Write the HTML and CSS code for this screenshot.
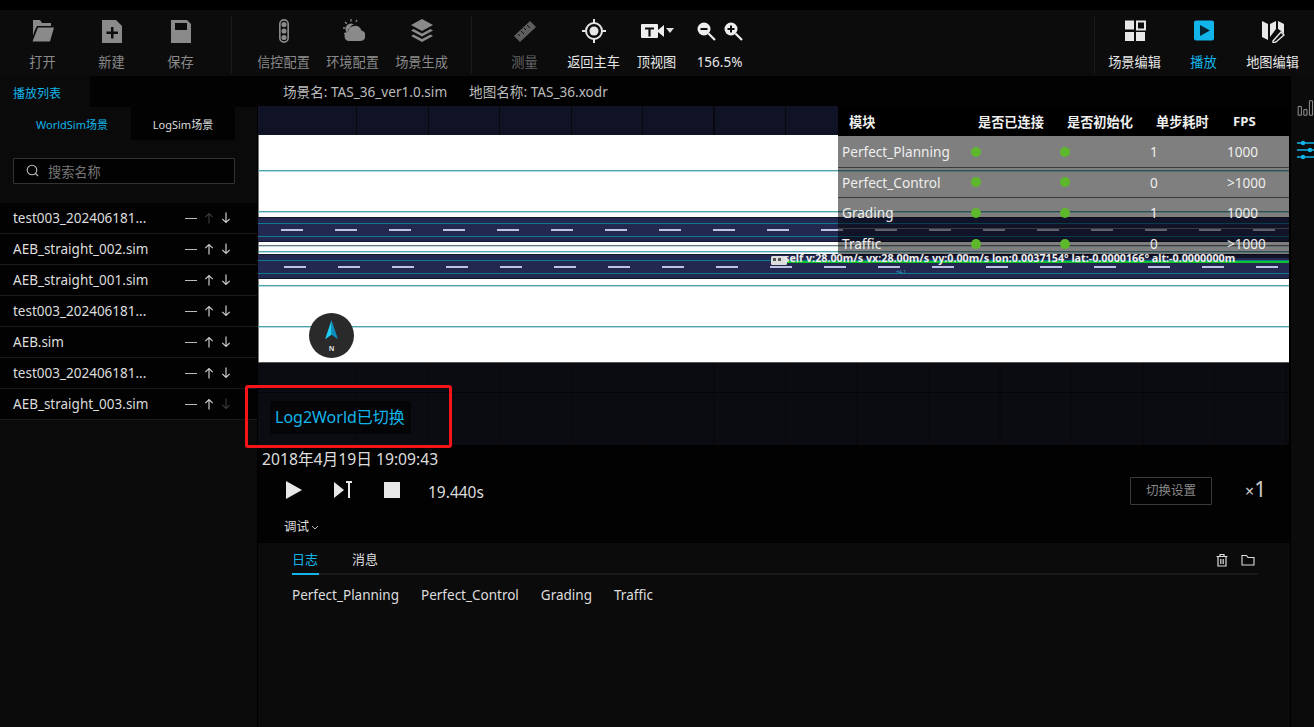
FILE: index.html
```html
<!DOCTYPE html>
<html lang="zh">
<head>
<meta charset="utf-8">
<title>播放</title>
<link rel="stylesheet" href="styles.css">
</head>
<body>
<div class="app">
  <div class="topstrip"></div>
  <header class="toolbar">
    <div class="tool"><svg class="ic" viewBox="0 0 24 24"><path class="g" d="M2 1h7l2 3h9v3H6L3.500 12 2 17z"/><path class="g" d="M7 8.500h16l-4 14H1.500z"/></svg><span>打开</span></div>
    <div class="tool"><svg class="ic" viewBox="0 0 24 24"><path class="g" d="M2 1h14l6 6v17H2z"/><path class="cut" d="M11 8h2.500v4.500H18V15h-4.500v4.500H11V15H6.500v-2.500H11z"/></svg><span>新建</span></div>
    <div class="tool"><svg class="ic" viewBox="0 0 24 24"><path class="g" d="M2 1h16l4 4v19H2z"/><rect class="cut" x="6" y="4" width="12" height="7"/></svg><span>保存</span></div>
    <div class="sep first"></div>
    <div class="tool"><svg class="ic" viewBox="0 0 24 26"><rect x="7.500" y="1" width="9" height="24" rx="4.500" fill="none" stroke="#8a8a8a" stroke-width="1.800"/><circle class="g" cx="12" cy="6" r="2.800"/><circle class="g" cx="12" cy="13" r="2.800"/><circle class="g" cx="12" cy="20" r="2.800"/></svg><span>信控配置</span></div>
    <div class="tool"><svg class="ic" viewBox="0 0 24 24"><circle class="g" cx="10" cy="10" r="5.500"/><path class="cut" d="M8 17a6 6 0 0 1 1-8.500 6.500 6.500 0 0 1 12 1l3 6v7H6z"/><path class="g" d="M8 22a4.800 4.800 0 0 1-1-9.400 7 7 0 0 1 13.500-1A5.300 5.300 0 0 1 19 22z"/><path d="M10 0v2.500M2 9h2.500M4 3l1.800 1.800M3 15l2-1.200M16 1l-1.200 2" stroke="#8a8a8a" stroke-width="1.300" fill="none"/></svg><span>环境配置</span></div>
    <div class="tool"><svg class="ic" viewBox="0 0 24 24"><path class="g" d="M12 0l11 6-11 6L1 6z"/><path class="g" d="M3.500 10l8.500 4.600 8.500-4.600 2.500 1.400-11 6-11-6z"/><path class="g" d="M3.500 15.500l8.500 4.600 8.500-4.600 2.500 1.400-11 6-11-6z"/></svg><span>场景生成</span></div>
    <div class="sep after"></div>
    <div class="tool dim"><svg class="ic" viewBox="0 0 24 24"><path d="M1 17L17 2l6 6L7 23z" fill="#5e5e5e"/><path d="M5 15l2 2M8 12l3 3M11 9l2 2M14 6l3 3" stroke="#0c0c0d" stroke-width="1"/></svg><span>测量</span></div>
    <div class="tool lit"><svg class="ic" viewBox="0 0 24 24"><circle cx="12" cy="12" r="8" fill="none" stroke="#e6e6e6" stroke-width="2"/><circle cx="12" cy="12" r="4.500" fill="#e6e6e6"/><path d="M12 0v4M12 20v4M0 12h4M20 12h4" stroke="#e6e6e6" stroke-width="2"/></svg><span>返回主车</span></div>
    <div class="tool lit narrow"><svg class="ic wide" viewBox="0 0 34 24"><rect x="1" y="5" width="17" height="14" rx="1" fill="#eee"/><path d="M5 8.500h9v2h-3.400v7H8.400v-7H5z" fill="#0c0c0d"/><path d="M18 11l6-5v12l-6-5z" fill="#eee"/><path d="M26 9h8l-4 5z" fill="#ddd"/></svg><span>顶视图</span></div>
    <div class="tool lit zoomgroup"><div class="zooms">
      <svg class="zi" viewBox="0 0 20 20"><circle cx="8" cy="8" r="6.500" fill="#eee"/><path d="M12.500 12.500L19 19" stroke="#eee" stroke-width="2.200"/><rect x="4.500" y="7" width="7" height="2" fill="#0c0c0d"/></svg>
      <svg class="zi" viewBox="0 0 20 20"><circle cx="8" cy="8" r="6.500" fill="#eee"/><path d="M12.500 12.500L19 19" stroke="#eee" stroke-width="2.200"/><path d="M7 4.500h2V7h2.500v2H9v2.500H7V9H4.500V7H7z" fill="#0c0c0d"/></svg>
    </div><span class="pct">156.5%</span></div>
    <div class="spacer"></div>
    <div class="sep last"></div>
    <div class="tool lit"><svg class="ic" viewBox="0 0 24 24"><rect x="2" y="1.500" width="9" height="9" fill="#e8e8e8"/><rect x="14" y="2.500" width="8" height="8" fill="none" stroke="#e8e8e8" stroke-width="2"/><rect x="2" y="13" width="9" height="9" fill="#e8e8e8"/><rect x="13" y="13" width="9" height="9" fill="#e8e8e8"/></svg><span>场景编辑</span></div>
    <div class="tool active"><svg class="ic" viewBox="0 0 24 24"><rect x="2" y="1.500" width="20" height="20" rx="2" fill="#12b5ea"/><path d="M8 6l10 5.500L8 17z" fill="#07222e"/></svg><span>播放</span></div>
    <div class="tool lit"><svg class="ic" viewBox="0 0 24 24"><path d="M1 2l6 3v16l-6-3zM9 5l6-3v8l-6 8z" fill="#e8e8e8"/><path d="M17 2l6 3v10l-3-3-3-2z" fill="#e8e8e8"/><path d="M12 22l8-9 3 3-8 7-3 1z" fill="none" stroke="#e8e8e8" stroke-width="1.400"/></svg><span>地图编辑</span></div>
  </header>

  <div class="main">
    <aside class="sidebar">
      <div class="sidehead"><div class="sidetitle">播放列表</div><div class="sidefill"></div></div>
      <div class="scenetabs"><div class="stab on">WorldSim场景</div><div class="stab off">LogSim场景</div></div>
      <div class="search"><svg class="sicon" viewBox="0 0 14 14"><circle cx="6" cy="6" r="4.800" fill="none" stroke="#bbb" stroke-width="1.100"/><path d="M9.500 9.500L12 12" stroke="#bbb" stroke-width="1.100"/></svg><span>搜索名称</span></div>
      <ul class="list">
        <li><span class="name">test003_202406181...</span><i class="minus"></i><svg class="arr off" viewBox="0 0 12 12"><use href="#up"/></svg><svg class="arr" viewBox="0 0 12 12"><use href="#down"/></svg></li>
        <li><span class="name">AEB_straight_002.sim</span><i class="minus"></i><svg class="arr" viewBox="0 0 12 12"><use href="#up"/></svg><svg class="arr" viewBox="0 0 12 12"><use href="#down"/></svg></li>
        <li><span class="name">AEB_straight_001.sim</span><i class="minus"></i><svg class="arr" viewBox="0 0 12 12"><use href="#up"/></svg><svg class="arr" viewBox="0 0 12 12"><use href="#down"/></svg></li>
        <li><span class="name">test003_202406181...</span><i class="minus"></i><svg class="arr" viewBox="0 0 12 12"><use href="#up"/></svg><svg class="arr" viewBox="0 0 12 12"><use href="#down"/></svg></li>
        <li><span class="name">AEB.sim</span><i class="minus"></i><svg class="arr" viewBox="0 0 12 12"><use href="#up"/></svg><svg class="arr" viewBox="0 0 12 12"><use href="#down"/></svg></li>
        <li><span class="name">test003_202406181...</span><i class="minus"></i><svg class="arr" viewBox="0 0 12 12"><use href="#up"/></svg><svg class="arr" viewBox="0 0 12 12"><use href="#down"/></svg></li>
        <li><span class="name">AEB_straight_003.sim</span><i class="minus"></i><svg class="arr" viewBox="0 0 12 12"><use href="#up"/></svg><svg class="arr off" viewBox="0 0 12 12"><use href="#down"/></svg></li>
      </ul>
    </aside>

    <section class="content">
      <div class="infobar"><span>场景名: TAS_36_ver1.0.sim</span><span>地图名称: TAS_36.xodr</span></div>
      <div class="scene">
        <div class="band top"></div>
        <div class="map">
          <div class="ln m35"></div>
          <div class="ln m40"></div>
          <div class="road r1"></div>
          <div class="ln grey m3"></div>
          <div class="ln m5"></div>
          <div class="road r2"></div>
          <div class="ln m6"></div>
          <div class="ln m40"></div>
        </div>
        <div class="band bottom"></div>

        <div class="overlay">
          <div class="row head"><div>模块</div><div>是否已连接</div><div>是否初始化</div><div>单步耗时</div><div>FPS</div></div>
          <div class="row"><div>Perfect_Planning</div><div><b class="dot"></b></div><div><b class="dot"></b></div><div>1</div><div>1000</div></div>
          <div class="row"><div>Perfect_Control</div><div><b class="dot"></b></div><div><b class="dot"></b></div><div>0</div><div>&gt;1000</div></div>
          <div class="row"><div>Grading</div><div><b class="dot"></b></div><div><b class="dot"></b></div><div>1</div><div>1000</div></div>
          <div class="row"><div>Traffic</div><div><b class="dot"></b></div><div><b class="dot"></b></div><div>0</div><div>&gt;1000</div></div>
        </div>

        <div class="egoline"></div>
        <svg class="car" viewBox="0 0 18 11"><rect x="1" y="1" width="16" height="9" rx="1.500" fill="#ddd"/><rect x="3" y="3" width="3" height="3" fill="#555"/><rect x="8" y="3" width="3" height="3" fill="#555"/></svg>
        <div class="egotext">self v:28.00m/s vx:28.00m/s vy:0.00m/s lon:0.0037154° lat:-0.0000166° alt:-0.0000000m</div>
        <div class="tinylabel">+4-1</div>

        <div class="compass"><svg viewBox="0 0 16 24"><path d="M8 0l7 21-7-5z" fill="#0b8fc0"/><path d="M8 0L1 21l7-5z" fill="#1fd0f5"/></svg><span>N</span></div>
        <div class="toast">Log2World已切换</div>
      </div>
      <div class="redbox"></div>

      <div class="playback">
        <div class="date">2018年4月19日 19:09:43</div>
        <div class="controls">
          <svg class="c1" viewBox="0 0 16 18"><path d="M0 0l16 9-16 9z" fill="#e8e8e8"/></svg>
          <svg class="c2" viewBox="0 0 18 18"><path d="M0 1l10 8-10 8z" fill="#e8e8e8"/><path d="M12 1h6M15 1v16" stroke="#e8e8e8" stroke-width="2" fill="none"/></svg>
          <div class="stop"></div>
          <div class="time">19.440s</div>
          <div class="spacer"></div>
          <div class="switchbtn">切换设置</div>
          <div class="speed"><small>×</small>1</div>
        </div>
        <div class="debug">调试<svg viewBox="0 0 8 6"><path d="M1 1l3 3 3-3" fill="none" stroke="#bbb" stroke-width="1"/></svg></div>
      </div>

      <div class="logpanel">
        <div class="logtabs">
          <div class="ltab on">日志</div>
          <div class="ltab">消息</div>
          <div class="spacer"></div>
          <svg class="li" viewBox="0 0 14 14"><path d="M3 4v9h8V4M1.500 3.500h11M5 3V1.500h4V3M5.800 6v5M8.200 6v5" fill="none" stroke="#ddd" stroke-width="1.200"/></svg>
          <svg class="li" viewBox="0 0 14 14"><path d="M1 2.500h4.500L7 4.500h6V12H1z" fill="none" stroke="#ddd" stroke-width="1.100"/></svg>
        </div>
        <div class="logitems"><span>Perfect_Planning</span><span>Perfect_Control</span><span>Grading</span><span>Traffic</span></div>
      </div>
    </section>

    <aside class="rail">
      <svg class="bars" viewBox="0 0 24 20"><path d="M1 8h4v11H1zM8 12h4v7H8zM15 1h4v18h-4z" fill="none" stroke="#999" stroke-width="1.200"/></svg>
      <svg class="sliders" viewBox="0 0 18 20"><path d="M0 3h18M0 10h18M0 17h18" stroke="#12b5ea" stroke-width="1.600"/><circle cx="6" cy="3" r="2.200" fill="#12b5ea"/><circle cx="13" cy="10" r="2.200" fill="#12b5ea"/><circle cx="6" cy="17" r="2.200" fill="#12b5ea"/></svg>
    </aside>
  </div>
</div>
<svg class="defs" width="0" height="0"><defs>
  <g id="up"><path d="M6 1.500v10M2.300 5.200L6 1.500l3.700 3.700" fill="none" stroke="currentColor" stroke-width="1.200"/></g>
  <g id="down"><path d="M6 .5v10M2.300 6.800L6 10.500l3.700-3.700" fill="none" stroke="currentColor" stroke-width="1.200"/></g>
</defs></svg>
</body>
</html>
```
FILE: styles.css
```css
* { box-sizing: border-box; }
html, body { margin: 0; padding: 0; height: 100%; background: #000; }
body { font-family: "Noto Sans", "Noto Sans CJK SC", sans-serif; color: #ddd; overflow: hidden; }
.defs { position: absolute; }
.app { width: 1314px; height: 727px; display: flex; flex-direction: column; overflow: hidden; }
.topstrip { height: 10px; background: #000; }
.spacer { flex: 1; }

.toolbar { height: 66px; background: #0c0c0d; display: flex; padding-left: 8px; padding-right: 7px; }
.tool { width: 69px; flex: none; display: flex; flex-direction: column; align-items: center; font-size: 13.200px; color: #8a8a8a; padding-top: 9px; }
.tool span { margin-top: 10px; line-height: 18px; white-space: nowrap; }
.tool.dim { color: #666; }
.tool.lit { color: #e6e6e6; }
.tool.active { color: #12b5ea; }
.tool.narrow { width: 57px; }
.ic { width: 24px; height: 24px; display: block; }
.ic.wide { width: 34px; }
.g { fill: #8a8a8a; }
.cut { fill: #0c0c0d; }
.sep { width: 1px; height: 58px; margin: 6px 16px 0 16px; background: #1a1a1b; flex: none; }
.sep.first { margin-right: 17px; }
.sep.after { margin-left: 15px; margin-right: 18px; }
.sep.last { margin-right: 5px; }
.zooms { display: flex; gap: 7px; height: 24px; align-items: center; }
.zi { width: 20px; height: 20px; display: block; }
.tool .pct { font-size: 13.500px; }

.main { flex: 1; display: flex; min-height: 0; }
.sidebar { width: 258px; background: #0a0a0b; border-right: 1px solid #000; display: flex; flex-direction: column; }
.sidehead { height: 31px; display: flex; }
.sidetitle { width: 90px; padding: 9px 0 0 13px; font-size: 12px; line-height: 18px; color: #12b5ea; }
.sidefill { flex: 1; background: #020203; }
.scenetabs { height: 33px; display: flex; padding-left: 13px; }
.stab { font-size: 11px; display: flex; align-items: center; justify-content: center; }
.stab.on { width: 118px; color: #12b5ea; }
.stab.off { width: 104px; background: #020203; color: #ddd; }
.search { margin: 18px 22px 0 13px; height: 26px; background: #020203; border: 1px solid #333; border-radius: 1px; display: flex; align-items: center; padding-left: 12px; font-size: 13.200px; color: #777; }
.sicon { width: 14px; height: 14px; margin-right: 8px; }
.list { list-style: none; margin: 19px 0 0 0; padding: 0; }
.list li { height: 31px; background: #020203; border-bottom: 1px solid #1a1a1b; display: flex; align-items: center; padding-left: 13px; font-size: 13.500px; color: #ddd; }
.name { width: 172px; white-space: nowrap; }
.minus { width: 12px; height: 1px; background: #bbb; margin-right: 6px; }
.arr { width: 12px; height: 12px; color: #ccc; margin-right: 5px; }
.arr.off { color: #3a3a3a; }

.content { width: 1032px; position: relative; display: flex; flex-direction: column; }
.infobar { height: 30px; background: #020203; display: flex; gap: 22px; padding-left: 25px; align-items: center; font-size: 13.600px; color: #bbb; }
.scene { position: relative; height: 339px; width: 1031px; }
.band { background-color: #0d0d16; background-image: repeating-linear-gradient(90deg, transparent 0 70px, #08080d 70px 71.500px); background-position: 28px 0; }
.band.top { height: 29px; background-color: #101326; }
.band.bottom { height: 83px; background-color: #0b0b12; border-top: 1px solid #555; position: relative; }
.band.bottom::after { content: ""; display: block; height: 1px; margin-top: 29px; background: #050508; }
.map { height: 227px; background: #fff; display: flow-root; box-shadow: inset 1px 0 0 #777; }
.ln { height: 1px; background: #4fa3ae; box-shadow: 0 1px 0 rgba(79, 163, 174, .4); }
.ln.grey { background: #777; }
.m3 { margin-top: 3px; }
.m5 { margin-top: 5px; }
.m6 { margin-top: 6px; }
.m35 { margin-top: 35px; }
.m40 { margin-top: 40px; }
.road { height: 25px; margin-top: 5px; background-color: #222850; background-repeat: no-repeat; background-image: repeating-linear-gradient(90deg, #bcc2e0 0 22px, transparent 22px 54px), linear-gradient(#0e7a90, #0e7a90), linear-gradient(#0e7a90, #0e7a90), linear-gradient(#14162a, #14162a), linear-gradient(#14162a, #14162a); background-size: 100% 2px, 100% 1px, 100% 1px, 100% 1px, 100% 1px; }
.r1 { background-position: 23px 12px, 0 6px, 0 19px, 0 0, 0 24px; }
.r2 { margin-top: 2px; background-position: 26px 12px, 0 6px, 0 19px, 0 0, 0 24px; }

.overlay { position: absolute; left: 580px; top: 0; width: 451px; height: 152px; background: rgba(0, 0, 0, .5); }
.row { display: grid; grid-template-columns: 130px 89px 89px 72px 71px; height: 30.500px; align-items: center; font-size: 13.600px; color: #eee; border-bottom: 1px solid #3c3c3c; }
.row > div:nth-child(1) { padding-left: 4px; }
.row > div:nth-child(2), .row > div:nth-child(3) { padding-left: 3px; display: flex; }
.row > div:nth-child(4) { padding-left: 4px; }
.row > div:nth-child(5) { padding-left: 9px; }
.row:last-child { border-bottom: 0; }
.row.head { height: 30px; margin-bottom: 1px; background: #000; font-size: 13.200px; font-weight: 700; color: #eee; border-bottom: 0; }
.row.head > div:nth-child(1) { padding-left: 11px; }
.row.head > div:nth-child(2), .row.head > div:nth-child(3), .row.head > div:nth-child(4) { padding-left: 10px; }
.row.head > div:nth-child(5) { padding-left: 15px; }
.dot { width: 10px; height: 10px; border-radius: 50%; background: #5db82c; display: block; }

.egoline { position: absolute; left: 529px; right: 0; top: 155px; height: 2px; background: #12c42c; }
.car { position: absolute; left: 512px; top: 149px; width: 18px; height: 11px; }
.egotext { position: absolute; left: 526px; top: 145px; font-size: 10.750px; line-height: 15px; font-weight: 700; color: #eee; white-space: nowrap; }
.tinylabel { position: absolute; left: 638px; top: 163px; font-size: 5px; line-height: 6px; color: #3aa0d0; }
.compass { position: absolute; left: 51px; top: 207px; width: 45px; height: 45px; border-radius: 50%; background: #2a2a2a; display: flex; flex-direction: column; align-items: center; padding-top: 7px; }
.compass svg { width: 15px; height: 22px; }
.compass span { font-size: 7px; line-height: 9px; font-weight: 700; color: #ddd; margin-top: 2px; }
.toast { position: absolute; left: 12px; top: 295px; width: 141px; height: 33px; background: #050507; border-radius: 2px; color: #12b5ea; font-size: 16px; line-height: 33px; padding-left: 5px; white-space: nowrap; }
.redbox { position: absolute; left: -13px; top: 309px; width: 207px; height: 63px; border: 3px solid #f5141a; border-radius: 3px; }

.playback { height: 98px; background: #020203; padding-left: 4px; }
.date { font-size: 15.700px; line-height: 20px; padding-top: 4px; height: 24px; color: #ddd; white-space: nowrap; }
.controls { display: flex; align-items: center; height: 40px; padding-top: 2px; padding-left: 24px; padding-right: 27px; }
.c1 { width: 16px; height: 18px; margin-right: 32px; }
.c2 { width: 18px; height: 18px; margin-right: 32px; }
.stop { width: 16px; height: 16px; background: #e8e8e8; margin-right: 28px; }
.time { font-size: 15.500px; color: #ddd; padding-top: 3px; }
.switchbtn { width: 82px; height: 28px; margin-top: 2px; margin-right: 33px; border: 1px solid #3a3a3a; border-radius: 1px; font-size: 12.500px; line-height: 26px; text-align: center; color: #888; }
.speed { font-size: 21px; line-height: 26px; color: #ccc; width: 18px; white-space: nowrap; }
.speed small { font-size: 16px; }
.debug { display: flex; align-items: center; padding-left: 22px; margin-top: 9px; font-size: 12.500px; line-height: 18px; color: #ddd; }
.debug svg { width: 8px; height: 6px; margin-left: 2px; margin-top: 2px; }

.logpanel { flex: 1; background: #0b0b0c; padding: 0 32px 0 34px; }
.logtabs { height: 32px; display: flex; border-bottom: 2px solid #1a1a1b; align-items: flex-start; }
.ltab { font-size: 13px; line-height: 18px; padding-top: 7px; height: 32px; width: 27px; margin-right: 33px; color: #ddd; white-space: nowrap; }
.ltab.on { color: #12b5ea; border-bottom: 2px solid #12b5ea; }
.li { width: 14px; height: 14px; margin-left: 12px; margin-top: 10px; }
.li:last-child { margin-right: 3px; }
.logitems { display: flex; gap: 22px; padding-top: 10px; font-size: 13.500px; line-height: 20px; color: #ddd; }

.rail { flex: 1; background: #0b0b0c; border-left: 1px solid #000; padding: 24px 0 0 6px; overflow: hidden; }
.bars { display: block; width: 20px; height: 16px; }
.sliders { display: block; width: 18px; height: 20px; margin-top: 24px; }
```
